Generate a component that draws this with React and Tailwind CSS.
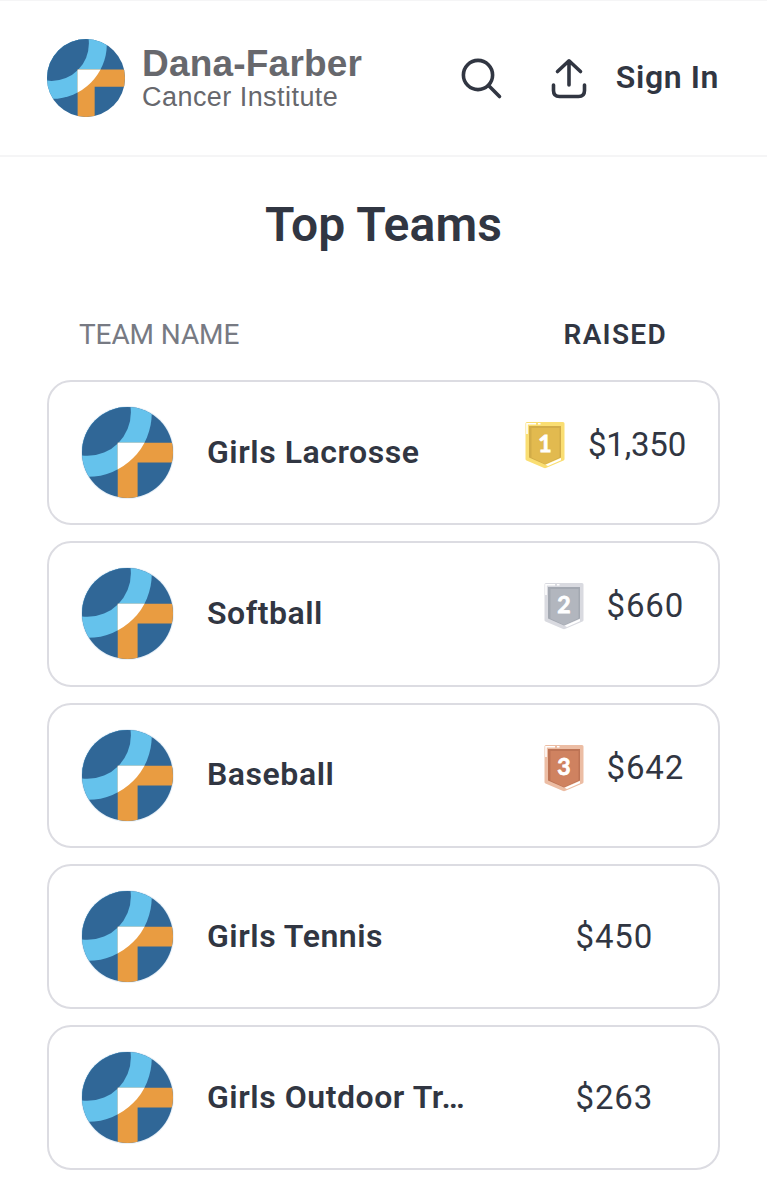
const TEAMS = [
  { name: "Girls Lacrosse", raised: "$1,350", rank: 1 },
  { name: "Softball", raised: "$660", rank: 2 },
  { name: "Baseball", raised: "$642", rank: 3 },
  { name: "Girls Tennis", raised: "$450" },
  { name: "Girls Outdoor Tr…", raised: "$263" },
];

const MEDALS = {
  1: { rim: "#fade72", side: "#d2ac48", fill: "#e2ba4f" },
  2: { rim: "#d9dae0", side: "#a3a8b1", fill: "#b2b6be" },
  3: { rim: "#ecbda4", side: "#bd7354", fill: "#cf8260" },
};

const Emblem = ({ id, className }) => (
  <svg viewBox="0 0 270 270" className={className}>
    <defs>
      <clipPath id={id}>
        <circle cx="135" cy="135" r="135" />
      </clipPath>
      <clipPath id={`${id}-sweep`}>
        <circle cx="18" cy="18" r="189" />
      </clipPath>
    </defs>
    <g clipPath={`url(#${id})`}>
      <rect width="270" height="270" fill="#306797" />
      <circle cx="18" cy="18" r="189" fill="#65c2ec" />
      <circle cx="16" cy="16" r="129" fill="#306797" />
      <path d="M106 106H270V165H165V270H106Z" fill="#e99c41" />
      <rect
        x="106"
        y="106"
        width="110"
        height="110"
        fill="#fff"
        clipPath={`url(#${id}-sweep)`}
      />
    </g>
  </svg>
);

const Medal = ({ rank }) => {
  const { rim, side, fill } = MEDALS[rank];
  return (
    <svg viewBox="0 0 40 48" className="h-12 w-10 shrink-0">
      <path
        d="M2 1H38Q39.5 1 39.5 2.5V38Q39.5 39 38.5 39.5L21.5 46.8Q20 47.5 18.5 46.8L1.5 39.5Q.5 39 .5 38V2.5Q.5 1 2 1Z"
        fill={rim}
      />
      <path d="M4 5H36V36.5L20 43.5L4 36.5Z" fill={side} />
      <path d="M6.5 7H34.5V36.2L20 43L6.5 36.5Z" fill={fill} />
      <path
        d="M2 13V2.8H11M13 2.8H15.5"
        fill="none"
        stroke="#fff"
        strokeWidth="1.6"
      />
      <path d="M20.5 43.8L36 37V39.2L23 45Z" fill="#fff" />
      <text
        x="20"
        y="31"
        textAnchor="middle"
        fontSize="23"
        fontWeight="700"
        fill="#fff"
        stroke="#fff"
        strokeWidth="0.8"
        fontFamily="Lato, sans-serif"
      >
        {rank}
      </text>
    </svg>
  );
};

const SearchIcon = () => (
  <svg
    viewBox="0 0 42 42"
    className="size-[42px]"
    fill="none"
    stroke="currentColor"
    strokeWidth="3.6"
    strokeLinecap="round"
  >
    <circle cx="17" cy="17" r="14.6" />
    <path d="M27.8 27.8L38.5 38.5" />
  </svg>
);

const ShareIcon = () => (
  <svg
    viewBox="0 0 36 42"
    className="h-[42px] w-9"
    fill="none"
    stroke="currentColor"
    strokeWidth="3.6"
    strokeLinecap="round"
    strokeLinejoin="round"
  >
    <path d="M18 27V3M6.5 13.5L18 2.8L29.5 13.5" />
    <path d="M2.5 27V32.5Q2.5 38.5 8.5 38.5H27.5Q33.5 38.5 33.5 32.5V27" />
  </svg>
);

const Header = () => (
  <header className="flex h-[157px] items-center justify-between border-t border-b-2 border-[#f5f5f6] pr-12 pl-[47px]">
    <div className="flex items-center gap-[17px]">
      <Emblem id="logo" className="size-[78px]" />
      <div className="pt-px font-['Liberation_Sans',sans-serif] text-[#67686d]">
        <div className="text-[37px] leading-[37px] font-bold tracking-[0.2px]">
          Dana-Farber
        </div>
        <div className="text-[27px] leading-[31px] tracking-[0.45px]">
          Cancer Institute
        </div>
      </div>
    </div>
    <nav className="flex items-center">
      <button className="mt-0.5 mr-[48px]">
        <SearchIcon />
      </button>
      <button className="mt-0.5 mr-[29px]">
        <ShareIcon />
      </button>
      <a
        href="#"
        className="-mt-0.5 text-[32px] leading-10 font-semibold tracking-[0.6px]"
      >
        Sign In
      </a>
    </nav>
  </header>
);

const TeamRow = ({ team, index }) => (
  <li className="flex h-[145.3px] items-center rounded-[24px] border-2 border-[#dcdce2] pl-8">
    <div className="size-[93px] shrink-0 rounded-full bg-[#e7f0f8] p-px">
      <Emblem id={`team-${index}`} className="size-full" />
    </div>
    <div className="mb-0.5 ml-[33px] flex-1 text-[32px] leading-10 font-semibold tracking-[0.55px] whitespace-nowrap">
      {team.name}
    </div>
    {team.rank ? (
      <div
        className={`mb-[15px] flex items-center ${
          team.rank === 1 ? "mr-[32px] gap-[23px]" : "mr-[34px] gap-[23px]"
        }`}
      >
        <Medal rank={team.rank} />
        <span
          className={`text-[33px] leading-10 ${
            team.rank === 1 ? "tracking-[-0.2px]" : "tracking-[0.8px]"
          }`}
        >
          {team.raised}
        </span>
      </div>
    ) : (
      <span className="mr-[65px] text-[33px] leading-10 tracking-[0.8px]">
        {team.raised}
      </span>
    )}
  </li>
);

export default function App() {
  return (
    <div className="h-[1200px] overflow-hidden bg-white font-[Roboto,sans-serif] text-[#313642]">
      <Header />
      <main className="pr-[47px] pl-[47px]">
        <h1 className="mt-[38px] text-center text-[48px] leading-[60px] font-semibold tracking-[0.1px]">
          Top Teams
        </h1>
        <div className="mt-[62px] flex items-center justify-between pr-[53px] pl-8 text-[28px] leading-9">
          <span className="tracking-[-0.1px] text-[#777a83]">TEAM NAME</span>
          <span className="font-semibold tracking-[1.3px]">RAISED</span>
        </div>
        <ul className="mt-[27px] space-y-4">
          {TEAMS.map((team, index) => (
            <TeamRow key={team.name} team={team} index={index} />
          ))}
        </ul>
      </main>
    </div>
  );
}
